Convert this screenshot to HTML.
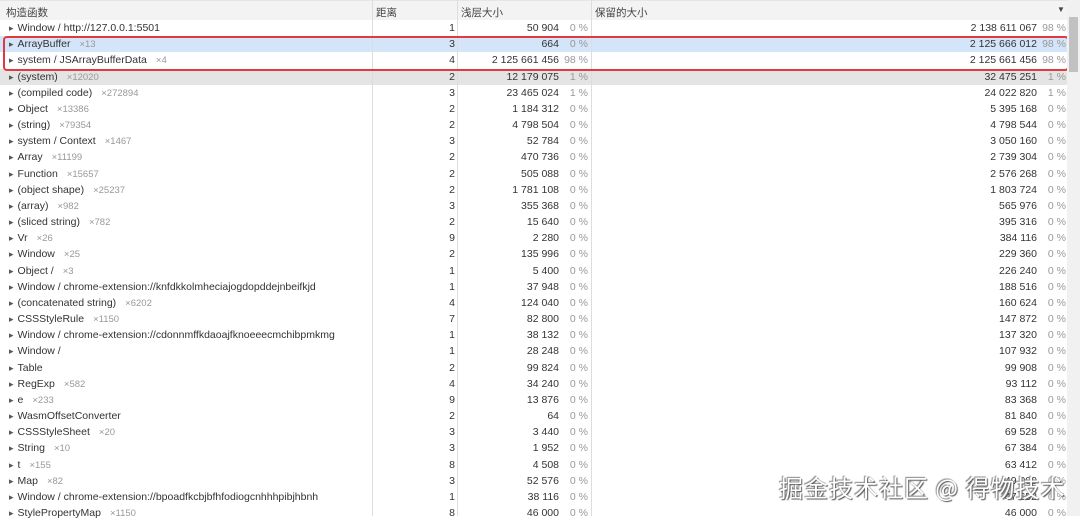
<!DOCTYPE html><html><head><meta charset="utf-8"><style>
body{margin:0;width:1080px;height:516px;overflow:hidden;background:#fff;font-family:"Liberation Sans","Noto Sans CJK SC",sans-serif;font-size:10.5px;color:#333;position:relative}
.hd{position:absolute;left:0;top:0;width:1067px;height:19px;background:#f3f3f3;border-bottom:1px solid #ccc;border-top:1px solid #e6e6e6}
.hd span{position:absolute;top:4px;color:#444}
.vl{position:absolute;top:0;height:516px;width:1px;background:#ddd}
.r{position:absolute;left:0;width:1067px;height:16px;line-height:16px;white-space:nowrap}
.r div{position:absolute;top:0}
.n{left:9px}.n:before{content:"▸";font-size:9px;margin-right:4px;color:#555}
.c{color:#999;margin-left:9px;font-size:9.5px}
.d{right:612px;text-align:right}
.s{right:508px}.sp{right:479px;color:#999}
.t{right:30px}.tp{right:1px;color:#999}
.sb{position:absolute;left:1067px;top:0;width:13px;height:516px;background:#f1f1f1}
.th{position:absolute;left:2px;top:17px;width:9px;height:55px;background:#c1c1c1}
.box{position:absolute;left:3px;top:36px;width:1066px;height:35px;border:2px solid #e0393e;border-radius:4px;box-sizing:border-box}
.wm{position:absolute;left:779px;top:469px;font-size:24px;color:#fff;text-shadow:1px 1px 1px #555,-1px -1px 1px #888;font-family:"Noto Sans CJK SC",sans-serif;letter-spacing:1px}
</style></head><body>
<div class="hd"><span style="left:6px">构造函数</span><span style="left:376px">距离</span><span style="left:461px">浅层大小</span><span style="left:595px">保留的大小</span><span style="left:1057px;font-size:8px">▼</span></div>
<div id="rows"></div>
<div class="vl" style="left:372px"></div><div class="vl" style="left:457px"></div><div class="vl" style="left:591px"></div>
<div class="box"></div>
<div class="sb"><div class="th"></div></div>
<div class="wm">掘金技术社区 @ 得物技术</div>
<script>
var d=[["Window / http://127.0.0.1:5501","",1,"50 904","0 %","2 138 611 067","98 %"],
["ArrayBuffer","×13",3,"664","0 %","2 125 666 012","98 %"],
["system / JSArrayBufferData","×4",4,"2 125 661 456","98 %","2 125 661 456","98 %"],
["(system)","×12020",2,"12 179 075","1 %","32 475 251","1 %"],
["(compiled code)","×272894",3,"23 465 024","1 %","24 022 820","1 %"],
["Object","×13386",2,"1 184 312","0 %","5 395 168","0 %"],
["(string)","×79354",2,"4 798 504","0 %","4 798 544","0 %"],
["system / Context","×1467",3,"52 784","0 %","3 050 160","0 %"],
["Array","×11199",2,"470 736","0 %","2 739 304","0 %"],
["Function","×15657",2,"505 088","0 %","2 576 268","0 %"],
["(object shape)","×25237",2,"1 781 108","0 %","1 803 724","0 %"],
["(array)","×982",3,"355 368","0 %","565 976","0 %"],
["(sliced string)","×782",2,"15 640","0 %","395 316","0 %"],
["Vr","×26",9,"2 280","0 %","384 116","0 %"],
["Window","×25",2,"135 996","0 %","229 360","0 %"],
["Object /","×3",1,"5 400","0 %","226 240","0 %"],
["Window / chrome-extension://knfdkkolmheciajogdopddejnbeifkjd","",1,"37 948","0 %","188 516","0 %"],
["(concatenated string)","×6202",4,"124 040","0 %","160 624","0 %"],
["CSSStyleRule","×1150",7,"82 800","0 %","147 872","0 %"],
["Window / chrome-extension://cdonnmffkdaoajfknoeeecmchibpmkmg","",1,"38 132","0 %","137 320","0 %"],
["Window /","",1,"28 248","0 %","107 932","0 %"],
["Table","",2,"99 824","0 %","99 908","0 %"],
["RegExp","×582",4,"34 240","0 %","93 112","0 %"],
["e","×233",9,"13 876","0 %","83 368","0 %"],
["WasmOffsetConverter","",2,"64","0 %","81 840","0 %"],
["CSSStyleSheet","×20",3,"3 440","0 %","69 528","0 %"],
["String","×10",3,"1 952","0 %","67 384","0 %"],
["t","×155",8,"4 508","0 %","63 412","0 %"],
["Map","×82",3,"52 576","0 %","49 000","0 %"],
["Window / chrome-extension://bpoadfkcbjbfhfodiogcnhhhpibjhbnh","",1,"38 116","0 %","47 652","0 %"],
["StylePropertyMap","×1150",8,"46 000","0 %","46 000","0 %"]];
var h="";d.forEach(function(r,i){var bg=i==1?"#d4e4f9":i==3?"#e4e4e4":"#fff";
h+='<div class="r" style="top:'+(20+i*16.17).toFixed(1)+'px;background:'+bg+'"><div class="n">'+r[0]+(r[1]?'<span class="c">'+r[1]+'</span>':'')+'</div><div class="d">'+r[2]+'</div><div class="s">'+r[3]+'</div><div class="sp">'+r[4]+'</div><div class="t">'+r[5]+'</div><div class="tp">'+r[6]+'</div></div>';});
document.getElementById("rows").innerHTML=h;
</script>
</body></html>
